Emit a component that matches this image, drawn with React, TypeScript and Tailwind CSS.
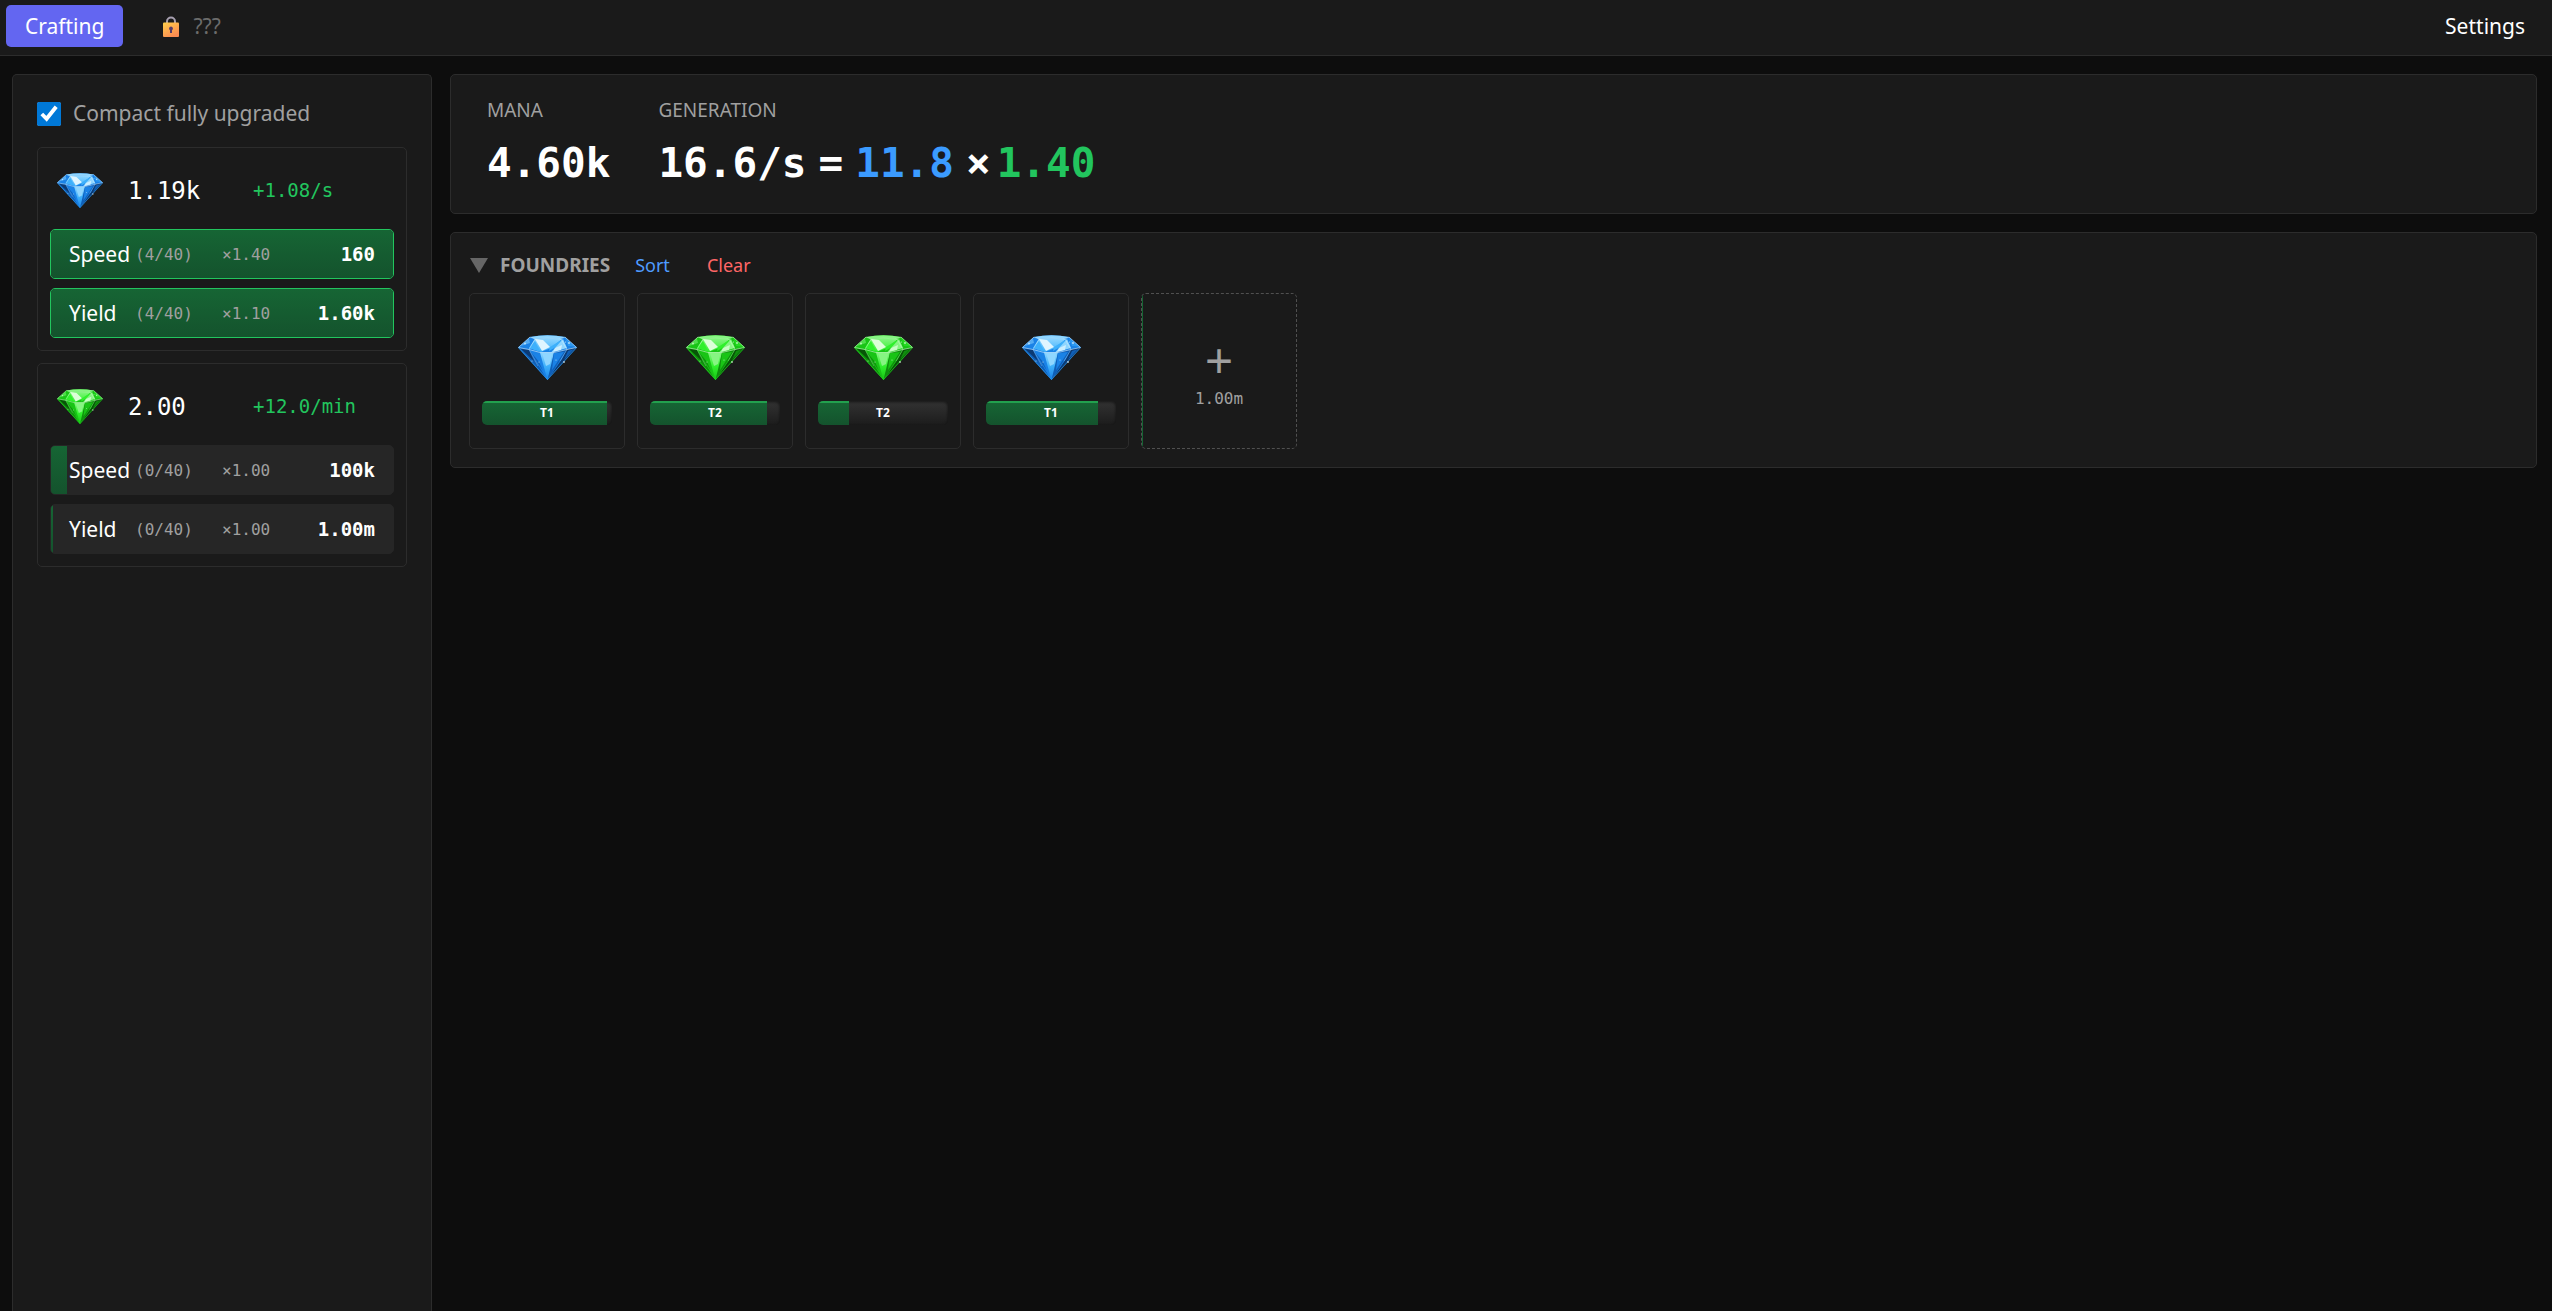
import React, { useId } from "react";

type Tone = "blue" | "green";

const palettes: Record<Tone, string[]> = {
  // light, sky, bright, mid, deep, dark
  blue: ["#dff5ff", "#8fd6ff", "#3db0fb", "#1a82e6", "#0f5fb8", "#0b3a74"],
  green: ["#dcffd9", "#86f582", "#2ff02c", "#19c416", "#0f8f0d", "#075407"],
};

function Gem({ tone, className }: { tone: Tone; className: string }) {
  const id = useId();
  const [light, sky, bright, mid, deep, dark] = palettes[tone];
  return (
    <svg viewBox="0 0 59 45" className={className} aria-hidden="true">
      <defs>
        <linearGradient id={`${id}t`} x1="0" y1="0" x2="0" y2="1">
          <stop offset="0" stopColor={sky} />
          <stop offset="1" stopColor={bright} />
        </linearGradient>
        <linearGradient id={`${id}c`} x1="0" y1="0" x2="0" y2="1">
          <stop offset="0" stopColor={sky} />
          <stop offset="0.5" stopColor={bright} />
          <stop offset="1" stopColor={mid} />
        </linearGradient>
      </defs>
      <path d="M0 12.500 12 2Q29.500-1.500 47 2L59 12.500 29.500 45Z" fill={mid} />
      {/* crown */}
      <path d="M0 12.500 12 2 17 4 11 13Z" fill={mid} />
      <path d="M3 11 11 3.500 12 8Z" fill={sky} opacity="0.5" />
      <path d="M59 12.500 47 2 42 4 49 14Z" fill={mid} />
      <path d="M47 3 57 11.500 50 11Z" fill={bright} opacity="0.5" />
      <path d="M12 2Q29.500-1.500 47 2L42 4Q29.500 2.500 17 4Z" fill={sky} />
      <path d="M17 4Q29.500 2.500 44 4L33 13 23 17 11 13Z" fill={`url(#${id}t)`} />
      <path d="M17 4 25 5 32 12 24 16Z" fill={light} />
      <path d="M32 12 45 4 40 11 31 16Z" fill={bright} />
      <path d="M45 4 49 13 33 17.500Z" fill={sky} />
      <path d="M37 13 44 10 43 15 35 17Z" fill={light} opacity="0.75" />
      <path d="M11 13 17 6 22 16Z" fill={bright} />
      {/* pavilion */}
      <path d="M0 12.500 11 14.500 29.500 45Z" fill={deep} />
      <path d="M3 14 11 15 16 26Z" fill={dark} />
      <path d="M11 14.500 22 17.500 29.500 45Z" fill={mid} />
      <path d="M12 16 21 27 25 36Z" fill={deep} />
      <path d="M22 17.500 36 17.500 32 40 29.500 45 27 36Z" fill={`url(#${id}c)`} />
      <path d="M24 18 34.500 18 32 29 28 31Z" fill={sky} />
      <path d="M36 17.500 49 14.500 29.500 45Z" fill={deep} />
      <path d="M36 18 46 17 34 35Z" fill={mid} />
      <path d="M49 14.500 59 12.500 29.500 45 44 24Z" fill={dark} />
      <path d="M50 16 56 14 46 25Z" fill={deep} />
      {/* edges */}
      <g fill="none" stroke={light} strokeWidth="0.700" strokeLinejoin="round">
        <path d="M0.500 12.500 12 2M47 2 58.500 12.500 49 14.500 36 17.500H22L11 14.500 0.500 12.500" opacity="0.800" />
        <path d="M12 2 17 4 11 14.500M47 2 43 4 49 14.500" opacity="0.600" />
        <path d="M17 4Q29.500 2.500 43 4" opacity="0.500" />
        <path d="M49 14.500 42 26M11 14.500 20 31" opacity="0.400" />
        <path d="M0.500 12.500 29.500 44.500 58.500 12.500" stroke={bright} opacity="0.700" />
      </g>
      <g fill={light} opacity="0.800">
        <circle cx="7" cy="8.500" r="0.900" />
        <circle cx="51" cy="8" r="0.900" />
        <circle cx="47.500" cy="7" r="0.600" />
        <circle cx="46" cy="27" r="0.900" />
        <circle cx="38" cy="25" r="0.600" />
        <circle cx="21" cy="27" r="0.600" />
        <circle cx="14" cy="26" r="0.600" />
      </g>
    </svg>
  );
}

function Lock() {
  return (
    <svg viewBox="0 0 16 21" className="h-[21px] w-4" aria-hidden="true">
      <defs>
        <linearGradient id="lock-body" x1="0" y1="0" x2="0.600" y2="1">
          <stop offset="0" stopColor="#ffcf4a" />
          <stop offset="1" stopColor="#fb8b52" />
        </linearGradient>
      </defs>
      <path d="M4 8V5.500a4 4 0 0 1 8 0V8" fill="none" stroke="#a79fb0" strokeWidth="2" />
      <rect y="6.500" width="16" height="14.500" rx="1" fill="url(#lock-body)" />
      <path d="M8 10.500a2 2 0 0 1 1 3.700V17H7v-2.800a2 2 0 0 1 1-3.700Z" fill="#553b69" />
    </svg>
  );
}

type Upgrade = { name: string; level: string; bonus: string; cost: string; fill: number };

function UpgradeRow({ name, level, bonus, cost, fill }: Upgrade) {
  const ready = fill >= 100;
  return (
    <button
      className={`relative grid h-[50px] w-full grid-cols-[66px_87px_1fr_auto] items-center overflow-hidden rounded-[5px] border px-[18px] pt-px text-left ${
        ready ? "border-[#22c55e]" : "border-[#262626]"
      } bg-[#262626]`}
    >
      <span
        className="absolute inset-y-0 left-0 bg-linear-to-b from-[#166534] to-[#14532d]"
        style={{ width: `${fill}%` }}
      />
      <span className="relative text-[21px]">{name}</span>
      <span className="relative font-[DejaVu_Sans_Mono,monospace] text-base text-[#a0a0a0]">{level}</span>
      <span className="relative font-[DejaVu_Sans_Mono,monospace] text-base text-[#a0a0a0]">{bonus}</span>
      <span className="relative font-[DejaVu_Sans_Mono,monospace] text-[19px] font-bold">{cost}</span>
    </button>
  );
}

function ResourceCard({ tone, amount, rate, upgrades }: { tone: Tone; amount: string; rate: string; upgrades: Upgrade[] }) {
  return (
    <section className="flex flex-col gap-[9px] rounded-[5px] border border-[#2c2c2c] p-3">
      <div className="grid h-[60px] grid-cols-[71px_125px_1fr] items-center pt-px pl-[7px]">
        <Gem tone={tone} className="h-[35px] w-[46px]" />
        <span className="font-[DejaVu_Sans_Mono,monospace] text-2xl">{amount}</span>
        <span className="font-[DejaVu_Sans_Mono,monospace] text-[19px] text-[#22c55e]">{rate}</span>
      </div>
      {upgrades.map((u) => (
        <UpgradeRow key={u.name} {...u} />
      ))}
    </section>
  );
}

function Foundry({ tone, tier, progress }: { tone: Tone; tier: string; progress: number }) {
  return (
    <button className="flex size-[156px] flex-col items-center rounded-[5px] border border-[#2c2c2c] px-3 pt-[41px]">
      <Gem tone={tone} className="h-[45px] w-[59px]" />
      <span className="relative mt-[21px] flex h-6 w-full items-center justify-center overflow-hidden rounded-[5px] bg-linear-to-b from-[#333333] to-[#1c1c1c] shadow-[inset_0_1px_3px_rgba(0,0,0,0.6)]">
        <span
          className="absolute inset-y-0 left-0 border-t-2 border-[#22a04e] bg-linear-to-b from-[#166534] to-[#14532d]"
          style={{ width: `${progress}%` }}
        />
        <span className="relative text-xs font-bold">{tier}</span>
      </span>
    </button>
  );
}

const foundries: { tone: Tone; tier: string; progress: number }[] = [
  { tone: "blue", tier: "T1", progress: 96 },
  { tone: "green", tier: "T2", progress: 90 },
  { tone: "green", tier: "T2", progress: 24 },
  { tone: "blue", tier: "T1", progress: 86 },
];

export default function App() {
  return (
    <div className="flex h-screen flex-col overflow-hidden bg-[#0d0d0d] font-[Noto_Sans,sans-serif] text-[21px] text-white">
      <header className="flex h-14 shrink-0 items-center justify-between border-b border-[#2c2c2c] bg-[#1a1a1a] px-[6px] pb-[3px]">
        <nav className="flex items-center gap-[22px]">
          <button className="h-[42px] rounded-[5px] bg-[#6366f1] px-[19px] pt-px">Crafting</button>
          <button className="flex h-[42px] items-center gap-[14px] px-[18px] pt-px text-[#6b6b6b]" disabled>
            <Lock />
            ???
          </button>
        </nav>
        <button className="h-[42px] px-[21px] pt-px">Settings</button>
      </header>

      <div className="flex min-h-0 flex-1 gap-[18px] overflow-hidden pt-[18px] pr-[15px] pl-3">
        <aside className="flex w-[420px] shrink-0 flex-col gap-3 rounded-t-[5px] border border-b-0 border-[#2c2c2c] bg-[#1a1a1a] px-6 pt-[25px]">
          <label className="flex h-[35px] items-center gap-3 pb-2 text-[#a0a0a0]">
            <input type="checkbox" defaultChecked className="size-6 accent-[#0078d7]" />
            Compact fully upgraded
          </label>
          <ResourceCard
            tone="blue"
            amount="1.19k"
            rate="+1.08/s"
            upgrades={[
              { name: "Speed", level: "(4/40)", bonus: "×1.40", cost: "160", fill: 100 },
              { name: "Yield", level: "(4/40)", bonus: "×1.10", cost: "1.60k", fill: 100 },
            ]}
          />
          <ResourceCard
            tone="green"
            amount="2.00"
            rate="+12.0/min"
            upgrades={[
              { name: "Speed", level: "(0/40)", bonus: "×1.00", cost: "100k", fill: 4.6 },
              { name: "Yield", level: "(0/40)", bonus: "×1.00", cost: "1.00m", fill: 0.5 },
            ]}
          />
        </aside>

        <main className="flex min-w-0 flex-1 flex-col gap-[18px]">
          <section className="flex gap-12 rounded-[5px] border border-[#2c2c2c] bg-[#1a1a1a] px-9 pt-[21px] pb-5">
            <div className="flex flex-col gap-[9px]">
              <h2 className="text-[19px]/[28px] text-[#a0a0a0]">MANA</h2>
              <p className="font-[DejaVu_Sans_Mono,monospace] text-[41px]/[60px] font-bold">4.60k</p>
            </div>
            <div className="flex flex-col gap-[9px]">
              <h2 className="text-[19px]/[28px] text-[#a0a0a0]">GENERATION</h2>
              <p className="flex font-[DejaVu_Sans_Mono,monospace] text-[41px]/[60px] font-bold">
                <span>16.6/s</span>
                <span className="mx-3">=</span>
                <span className="text-[#3b9bff]">11.8</span>
                <span className="mr-[6px] ml-3">×</span>
                <span className="text-[#22c55e]">1.40</span>
              </p>
            </div>
          </section>

          <section className="flex flex-col gap-[14px] rounded-[5px] border border-[#2c2c2c] bg-[#1a1a1a] p-[18px]">
            <div className="flex h-7 items-center gap-[13px]">
              <button className="flex items-center gap-3 pl-px text-[19px] font-bold text-[#a0a0a0]">
                <svg viewBox="0 0 18 15" className="h-[15px] w-[18px]" aria-hidden="true">
                  <path d="M0 0h18L9 15Z" fill="#666666" />
                </svg>
                FOUNDRIES
              </button>
              <button className="px-3 text-[18px] text-[#4f9bff]">Sort</button>
              <button className="px-3 text-[18px] text-[#ff6666]">Clear</button>
            </div>
            <div className="flex flex-wrap gap-3">
              {foundries.map((f, i) => (
                <Foundry key={i} {...f} />
              ))}
              <button className="relative flex size-[156px] flex-col items-center justify-center overflow-hidden rounded-[5px] border border-dashed border-[#505050] text-[#a0a0a0]">
                <span className="absolute inset-y-0 left-0 w-px bg-[#166534]" />
                <span className="font-[Liberation_Sans,sans-serif] text-5xl/[56px]">+</span>
                <span className="font-[DejaVu_Sans_Mono,monospace] text-base/[20px]">1.00m</span>
              </button>
            </div>
          </section>
        </main>
      </div>
    </div>
  );
}
